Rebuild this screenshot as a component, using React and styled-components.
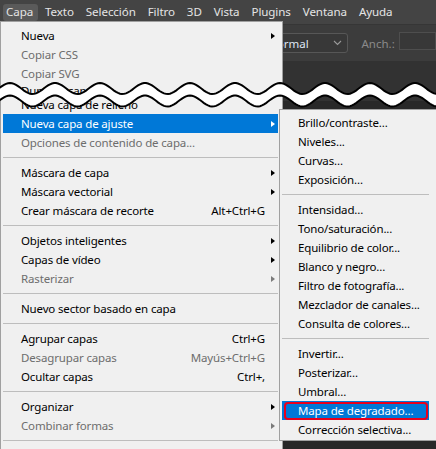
import React from "react";
import styled, { createGlobalStyle, css } from "styled-components";

const GlobalStyle = createGlobalStyle`
  html, body {
    margin: 0;
    padding: 0;
    background: #282828;
  }
  body {
    font-family: "Noto Sans", "Liberation Sans", sans-serif;
  }
`;

const Screen = styled.div`
  position: relative;
  width: 436px;
  height: 449px;
  overflow: hidden;
  background: #282828;
  display: flex;
  flex-direction: column;
`;

const MenuBar = styled.div`
  flex: none;
  height: 24px;
  display: flex;
  align-items: stretch;
  background: #444444;
  color: #e4e4e4;
  font-size: 11.6px;
  letter-spacing: -0.1px;
`;

const BarItem = styled.div`
  position: relative;
  padding: 0 6px;
  line-height: 24px;
  span {
    position: relative;
  }
  ${(p) =>
    p.$open &&
    css`
      &::before {
        content: "";
        position: absolute;
        left: 3px;
        right: 1px;
        top: 4px;
        bottom: 3px;
        background: #5a5a5a;
        border-radius: 3px;
      }
    `}
`;

const OptionsBar = styled.div`
  flex: none;
  height: 37px;
  display: flex;
  align-items: center;
  padding-left: 246px;
  background: #3c3c3c;
  border-top: 1px solid #363636;
  box-sizing: border-box;
`;

const Select = styled.div`
  width: 104px;
  height: 20px;
  box-sizing: border-box;
  display: flex;
  align-items: center;
  justify-content: space-between;
  padding: 0 5px 0 21px;
  border: 1px solid #575757;
  border-radius: 3px;
  background: #383838;
  color: #dfe6f4;
  font-size: 11.5px;
`;

const FieldLabel = styled.span`
  margin-left: 13px;
  color: #8a8a8a;
  font-size: 11.5px;
`;

const Field = styled.div`
  margin-left: 4px;
  width: 36px;
  height: 16px;
  margin-top: -4px;
  background: #383838;
  border: 1px solid #4e4e4e;
`;

const TabStrip = styled.div`
  flex: none;
  height: 40px;
  background: #323232;
`;

const Canvas = styled.div`
  flex: 1;
  background: #282828;
`;

const Menu = styled.div`
  position: absolute;
  top: 21px;
  left: 0;
  width: 283px;
  height: 440px;
  box-sizing: border-box;
  padding: 4px 4px 0 2px;
  background: #f0f0f0;
  border: 1px solid #a0a0a0;
  color: #000;
  font-size: 11.5px;
  letter-spacing: -0.15px;
  z-index: 2;
`;

const Row = styled.div`
  height: ${(p) => (p.$short ? 12 : 19)}px;
  display: grid;
  grid-template-columns: 1fr auto 13px;
  align-items: center;
  padding-left: ${(p) => p.$indent}px;
  white-space: nowrap;
  color: ${(p) => (p.$disabled ? "#6d6d6d" : "#000")};
  ${(p) =>
    p.$active &&
    css`
      position: relative;
      background: #0078d7;
      color: #fff;
    `}
`;

const Shortcut = styled.span`
  text-align: right;
`;

const Arrow = styled.span`
  justify-self: start;
  margin-left: 6px;
  width: 0;
  height: 0;
  border-left: 4px solid ${(p) => (p.$disabled ? "#7a7a7a" : p.$light ? "#fff" : "#000")};
  border-top: 3.5px solid transparent;
  border-bottom: 3.5px solid transparent;
`;

const Separator = styled.div`
  height: 11px;
  display: flex;
  align-items: center;
  &::after {
    content: "";
    flex: 1;
    height: 1px;
    background: #bdbdbd;
  }
`;

const SubMenu = styled.div`
  position: absolute;
  top: -5px;
  left: 276px;
  width: 161px;
  box-sizing: border-box;
  padding: 3px 10px 1px 2px;
  background: #f0f0f0;
  border: 1px solid #a0a0a0;
  color: #000;
  z-index: 3;
`;

const Marked = styled(Row)`
  &::after {
    content: "";
    position: absolute;
    inset: 1px 1px 0 2px;
    border: 2.5px solid #e8001c;
    border-radius: 4px;
  }
`;

const Wave = styled.svg`
  position: absolute;
  top: 0;
  left: 0;
  z-index: 10;
  pointer-events: none;
`;

const barItems = ["Capa", "Texto", "Selección", "Filtro", "3D", "Vista", "Plugins", "Ventana", "Ayuda"];

const mainItems = [
  { label: "Nueva", arrow: true },
  { label: "Copiar CSS", disabled: true },
  { label: "Copiar SVG", disabled: true },
  { label: "Duplicar capa...", short: true },
  { label: "Nueva capa de relleno" },
  { label: "Nueva capa de ajuste", arrow: true, active: true },
  { label: "Opciones de contenido de capa...", disabled: true },
  "sep",
  { label: "Máscara de capa", arrow: true },
  { label: "Máscara vectorial", arrow: true },
  { label: "Crear máscara de recorte", keys: "Alt+Ctrl+G" },
  "sep",
  { label: "Objetos inteligentes", arrow: true },
  { label: "Capas de vídeo", arrow: true },
  { label: "Rasterizar", arrow: true, disabled: true },
  "sep",
  { label: "Nuevo sector basado en capa" },
  "sep",
  { label: "Agrupar capas", keys: "Ctrl+G" },
  { label: "Desagrupar capas", keys: "Mayús+Ctrl+G", disabled: true },
  { label: "Ocultar capas", keys: "Ctrl+," },
  "sep",
  { label: "Organizar", arrow: true },
  { label: "Combinar formas", arrow: true, disabled: true },
  "sep",
];

const subItems = [
  "Brillo/contraste...",
  "Niveles...",
  "Curvas...",
  "Exposición...",
  "sep",
  "Intensidad...",
  "Tono/saturación...",
  "Equilibrio de color...",
  "Blanco y negro...",
  "Filtro de fotografía...",
  "Mezclador de canales...",
  "Consulta de colores...",
  "sep",
  "Invertir...",
  "Posterizar...",
  "Umbral...",
  "Mapa de degradado...",
  "Corrección selectiva...",
];

function wavePoints(offset) {
  const pts = [];
  for (let x = -4; x <= 440; x += 2) {
    const y = 88.5 + offset - 5.5 * Math.cos((2 * Math.PI * (x - 10)) / 45);
    pts.push([x, y]);
  }
  return pts;
}

const topEdge = wavePoints(0);
const bottomEdge = wavePoints(12.5);
const toPath = (pts) => pts.map(([x, y], i) => `${i ? "L" : "M"}${x} ${y.toFixed(2)}`).join(" ");
const bandPath =
  toPath(topEdge) +
  " " +
  bottomEdge
    .slice()
    .reverse()
    .map(([x, y]) => `L${x} ${y.toFixed(2)}`)
    .join(" ") +
  " Z";

function Chevron() {
  return (
    <svg width="9" height="6" viewBox="0 0 9 6">
      <path d="M1 1l3.5 3.5L8 1" fill="none" stroke="#9a9a9a" strokeWidth="1.1" />
    </svg>
  );
}

function SubMenuPanel() {
  return (
    <SubMenu>
      {subItems.map((label, i) => {
        if (label === "sep") return <Separator key={i} />;
        const Item = label === "Mapa de degradado..." ? Marked : Row;
        return (
          <Item key={i} $indent={16} $active={label === "Mapa de degradado..."}>
            <span>{label}</span>
          </Item>
        );
      })}
    </SubMenu>
  );
}

export default function App() {
  return (
    <>
      <GlobalStyle />
      <Screen>
        <MenuBar>
          {barItems.map((name, i) => (
            <BarItem key={name} $open={i === 0}>
              <span>{name}</span>
            </BarItem>
          ))}
        </MenuBar>
        <OptionsBar>
          <Select>
            <span>Normal</span>
            <Chevron />
          </Select>
          <FieldLabel>Anch.:</FieldLabel>
          <Field />
        </OptionsBar>
        <TabStrip />
        <Canvas />

        <Menu>
          {mainItems.map((item, i) => {
            if (item === "sep") return <Separator key={i} />;
            return (
              <Row
                key={i}
                $indent={18}
                $short={item.short}
                $disabled={item.disabled}
                $active={item.active}
              >
                <span>{item.label}</span>
                <Shortcut>{item.keys || ""}</Shortcut>
                {item.arrow ? <Arrow $disabled={item.disabled} $light={item.active} /> : <span />}
                {item.active && <SubMenuPanel />}
              </Row>
            );
          })}
        </Menu>

        <Wave width="436" height="449" viewBox="0 0 436 449">
          <path d={bandPath} fill="#fff" />
          <path d={toPath(topEdge)} fill="none" stroke="#000" strokeWidth="2" />
          <path d={toPath(bottomEdge)} fill="none" stroke="#000" strokeWidth="2" />
        </Wave>
      </Screen>
    </>
  );
}
